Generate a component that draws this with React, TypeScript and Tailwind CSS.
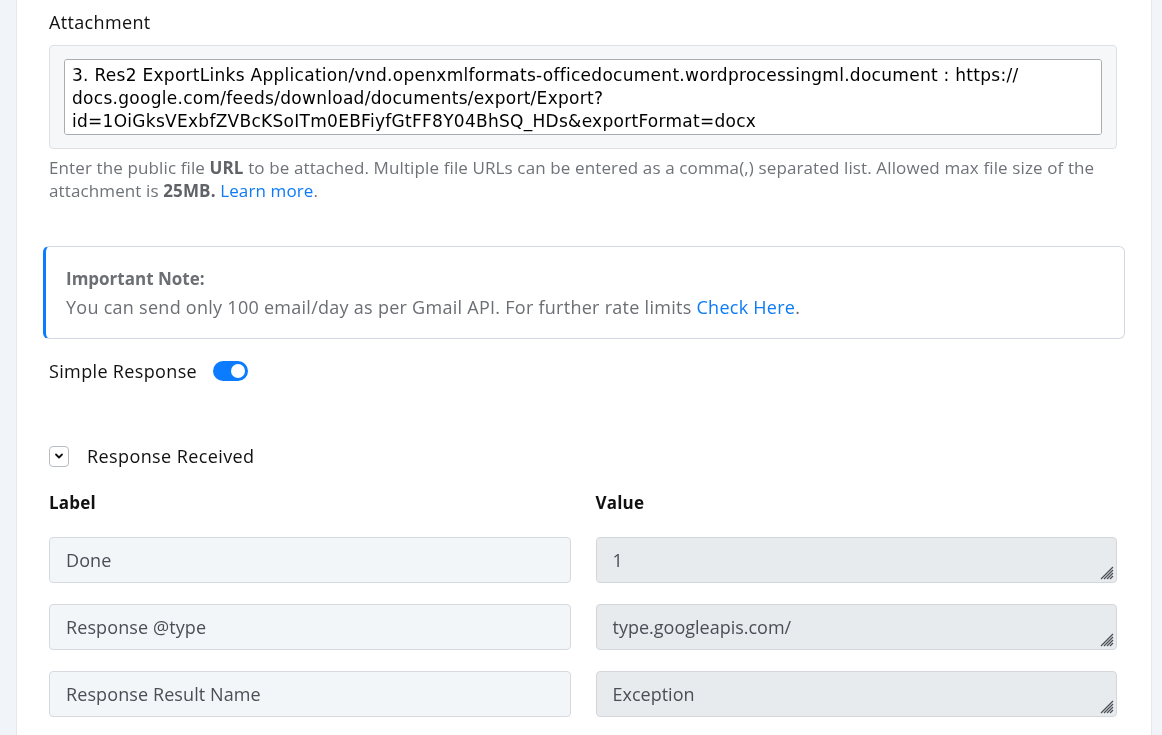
import React from "react";

const rows = [
  { label: "Done", value: "1" },
  { label: "Response @type", value: "type.googleapis.com/" },
  { label: "Response Result Name", value: "Exception" },
];

// zero-width space lets the URL wrap right after its scheme
const attachmentText =
  "3. Res2 ExportLinks Application/vnd.openxmlformats-officedocument.wordprocessingml.document : https://\u200Bdocs.google.com/feeds/download/documents/export/Export?id=1OiGksVExbfZVBcKSoITm0EBFiyfGtFF8Y04BhSQ_HDs&exportFormat=docx";

function ResizeGrip() {
  return (
    <svg className="pointer-events-none absolute bottom-[3px] right-[3px]" width="15" height="15" viewBox="0 0 15 15">
      <g stroke="#4b4f55" strokeWidth="1.2">
        <line x1="2" y1="14" x2="14" y2="2" />
        <line x1="5" y1="14" x2="14" y2="5" />
        <line x1="8" y1="14" x2="14" y2="8" />
        <line x1="11" y1="14" x2="14" y2="11" />
      </g>
    </svg>
  );
}

export default function App() {
  return (
    <div
      className="flex h-[735px] w-[1162px] overflow-hidden bg-[#f1f4f8]"
      style={{ fontFamily: "'Open Sans', Lato, sans-serif" }}
    >
      <div className="w-[17px] shrink-0 border-r border-[#e3e8ef] bg-[#f1f4f8]" />
      <div className="w-[1134px] shrink-0 bg-white pl-[32px] pr-[34px]">
        {/* Attachment field */}
        <div className="pt-[10px] text-[18px] leading-[24px] tracking-[0.35px] text-[#111]">Attachment</div>
        <div className="mt-[11px] rounded-[4px] border border-[#dde1e6] bg-[#f5f7f9] px-[14px] py-[13px]">
          <textarea
            readOnly
            value={attachmentText}
            className="block h-[76px] w-full resize-none rounded-[3px] border border-[#a9adb2] bg-white px-[7px] py-[4px] text-[17px] leading-[23px] tracking-[0.28px] text-black outline-none"
            style={{ fontFamily: "'DejaVu Sans', sans-serif" }}
          />
        </div>
        <p className="mt-[7px] text-[17px] leading-[23px] tracking-[0.12px] text-[#6f7379]">
          Enter the public file <b className="font-bold text-[#5f6368]">URL</b> to be attached. Multiple file URLs can be
          entered as a comma(,) separated list. Allowed max file size of the attachment is{" "}
          <b className="font-bold text-[#5f6368]">25MB.</b>{" "}
          <a className="text-[#0d7bf5]">Learn more</a>.
        </p>

        {/* Note */}
        <div className="-ml-[6px] mr-[-8px] mt-[44px] rounded-[6px] border border-l-[3px] border-[#d3d8e2] border-l-[#0b7bff] px-[20px] pb-[19px] pt-[20px]">
          <div className="text-[17px] font-bold leading-[24px] text-[#6b6e73]">Important Note:</div>
          <div className="mt-[4px] text-[18px] leading-[24px] tracking-[0.27px] text-[#6b6e73]">
            You can send only 100 email/day as per Gmail API. For further rate limits{" "}
            <a className="text-[#0d7bf5]">Check Here</a>.
          </div>
        </div>

        {/* Simple response toggle */}
        <div className="mt-[20px] flex items-center gap-[16px]">
          <span className="text-[18px] leading-[24px] tracking-[0.35px] text-[#111]">Simple Response</span>
          <span className="relative inline-block h-[20px] w-[35px] rounded-full bg-[#0b7bff]">
            <span className="absolute right-[3px] top-[3px] h-[14px] w-[14px] rounded-full bg-white" />
          </span>
        </div>

        {/* Response received */}
        <div className="mt-[61px] flex items-center gap-[18px]">
          <span className="flex h-[21px] w-[20px] items-center justify-center rounded-[4px] border border-[#b7bcc3] bg-white">
            <svg width="10" height="10" viewBox="0 0 10 10" fill="none">
              <path d="M2 3.5 L5 6.5 L8 3.5" stroke="#111" strokeWidth="1.8" strokeLinecap="round" strokeLinejoin="round" />
            </svg>
          </span>
          <span className="text-[18px] leading-[24px] tracking-[0.4px] text-[#111]">Response Received</span>
        </div>

        <div className="mt-[23px] grid grid-cols-2 gap-x-[25px]">
          <div className="text-[17px] font-bold leading-[24px] tracking-[0.2px] text-[#111]">Label</div>
          <div className="text-[17px] font-bold leading-[24px] tracking-[0.2px] text-[#111]">Value</div>
        </div>

        <div className="mt-[22px] flex flex-col gap-[21px]">
          {rows.map((r) => (
            <div key={r.label} className="grid grid-cols-2 gap-x-[25px]">
              <div className="flex h-[46px] items-center rounded-[4px] border border-[#d6dade] bg-[#f3f6f9] px-[16px] text-[18px] tracking-[0.1px] text-[#4a4f57]">
                {r.label}
              </div>
              <div className="relative">
                <textarea
                  readOnly
                  value={r.value}
                  className="block h-[46px] w-full resize-none rounded-[4px] border border-[#d3d7db] bg-[#e8ebee] px-[16px] py-[10px] text-[18px] leading-[24px] text-[#4a4f57] outline-none"
                />
                <ResizeGrip />
              </div>
            </div>
          ))}
        </div>
      </div>
      <div className="flex-1 border-l border-[#e3e8ef] bg-[#f1f4f8]" />
    </div>
  );
}
